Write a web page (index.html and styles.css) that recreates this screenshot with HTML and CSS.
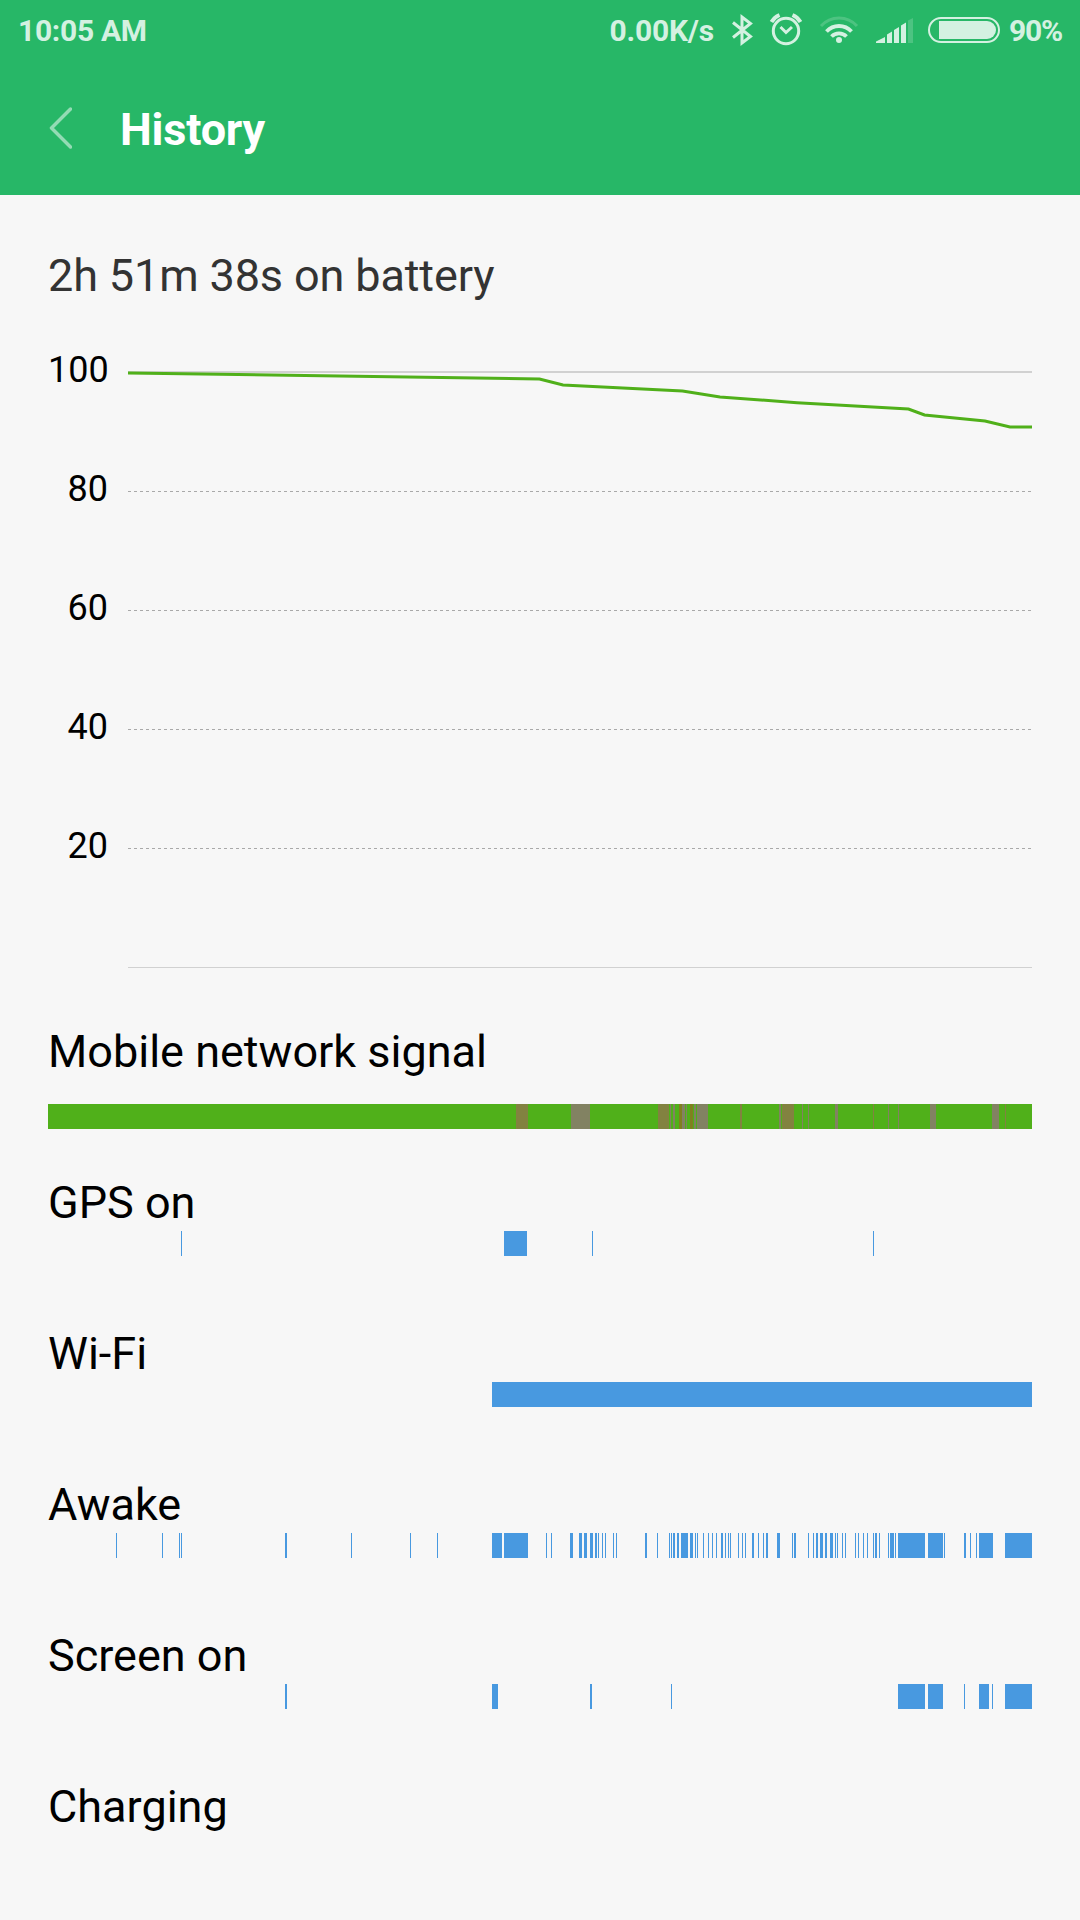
FILE: index.html
```
<!DOCTYPE html>
<html lang="en">
<head>
    <meta charset="UTF-8">
    <meta name="viewport" content="width=device-width, initial-scale=1.0">
    <title>History</title>
    <link rel="stylesheet" href="styles.css">
</head>
<body>
    <div class="header">
        <div class="status-bar">
            <span class="clock">10:05 AM</span>
            <span class="speed">0.00K/s</span>
            <svg class="status-icons" width="282" height="60" viewBox="718 0 282 60">
                <!-- bluetooth -->
                <path class="stroke" stroke-width="3" d="M733 22.5l17.500 14l-8.500 6.500V17l8.500 6.500L733 37.500"/>
                <!-- alarm -->
                <circle class="stroke" stroke-width="3" cx="786" cy="31" r="12.700"/>
                <path class="stroke" stroke-width="3" d="M780.500 27l5.500 5.500l6-5.500"/>
                <path class="stroke" stroke-width="4" d="M771.500 22q3-5 8-7M800.500 22q-3-5-8-7"/>
                <!-- wifi -->
                <path class="stroke faint" stroke-width="3" d="M821 26a24.200 24.200 0 0 1 36 0"/>
                <path class="stroke" stroke-width="3.800" d="M826.500 31.500a17 17 0 0 1 25 0M831.500 36.500a10.500 10.500 0 0 1 15 0"/>
                <circle class="fill" cx="839" cy="40" r="3"/>
                <!-- signal -->
                <path class="fill" d="M876 43v-1.500l9-4.500v6zM887 43v-8.500l5-3V43zM894 43V30l5-3v16zM901 43V25.500l5-3V43z"/>
                <path class="fill faint" d="M908 43V20.500l5-2.500v25z"/>
                <!-- battery -->
                <rect class="stroke" stroke-width="2" x="929" y="18" width="70" height="24" rx="12"/>
                <path class="fill" d="M939 21h48a9 9 0 0 1 0 18h-48z"/>
            </svg>
            <span class="percent">90%</span>
        </div>
        <div class="title-bar">
            <svg class="back" width="24" height="44" viewBox="0 0 24 44">
                <path d="M22.500 3L3.500 22l19 19"/>
            </svg>
            <h1>History</h1>
        </div>
    </div>

    <div class="content">
        <h2 class="duration">2h 51m 38s on battery</h2>

        <div class="chart">
            <div class="axis">
                <span>100</span>
                <span>80</span>
                <span>60</span>
                <span>40</span>
                <span>20</span>
            </div>
            <svg class="plot" width="904" height="600" viewBox="128 370 904 600">
                <path class="solid" stroke-width="2" d="M128 372h904"/>
                <path class="solid" stroke-width="1" d="M128 967.5h904"/>
                <path class="dashed" d="M128 491.5h904M128 610.500h904M128 729.500h904M128 848.500h904"/>
                <polyline class="level" points="128,373 539.500,379 563,385 682.500,391 720,397 797,402.700 908.500,409 924.500,415 985,421 1010,427 1032,427"/>
            </svg>
        </div>

        <div class="row signal">
            <h2>Mobile network signal</h2>
            <svg class="track" id="signal" viewBox="48 0 984 25"></svg>
        </div>
        <div class="row">
            <h2>GPS on</h2>
            <svg class="track" id="gps" viewBox="48 0 984 25"></svg>
        </div>
        <div class="row">
            <h2>Wi-Fi</h2>
            <svg class="track" id="wifi" viewBox="48 0 984 25"></svg>
        </div>
        <div class="row">
            <h2>Awake</h2>
            <svg class="track" id="awake" viewBox="48 0 984 25"></svg>
        </div>
        <div class="row">
            <h2>Screen on</h2>
            <svg class="track" id="screen" viewBox="48 0 984 25"></svg>
        </div>
        <div class="row">
            <h2>Charging</h2>
        </div>
    </div>

    <script src="script.js"></script>
</body>
</html>
```
FILE: styles.css
```
* {
    margin: 0;
    padding: 0;
    box-sizing: border-box;
}

body {
    font-family: Roboto, sans-serif;
    background-color: #f7f7f7;
    color: #000000;
    height: 1920px;
    overflow: hidden;
}

.header {
    height: 195px;
    background-color: #27b767;
    color: #ffffff;
}

.status-bar {
    display: flex;
    align-items: center;
    height: 60px;
    padding: 0 18px;
    font-size: 30px;
    font-weight: bold;
    line-height: 60px;
    color: #d4f1e1;
}

.clock {
    margin-right: auto;
    padding-top: 2px;
    letter-spacing: -0.3px;
}

.speed {
    margin-right: 4px;
    padding-top: 2px;
    letter-spacing: -0.2px;
}

.percent {
    width: 53px;
    margin-left: 9px;
    padding-top: 2px;
    letter-spacing: -1.2px;
    white-space: nowrap;
}

.stroke {
    fill: none;
    stroke: #d4f1e1;
}

.fill {
    fill: #d4f1e1;
}

.faint {
    opacity: 0.22;
}

.title-bar {
    display: flex;
    align-items: center;
    height: 135px;
    padding: 0 0 0 48px;
}

.back {
    margin-top: 1px;
    fill: none;
    stroke: #93dbb4;
    stroke-width: 3.5;
    stroke-linecap: round;
    stroke-linejoin: round;
}

h1 {
    margin-left: 48px;
    padding-top: 4px;
    font-size: 45px;
    line-height: 50px;
    letter-spacing: -0.2px;
}

h2 {
    font-size: 45px;
    font-weight: normal;
    line-height: 50px;
}

.content {
    padding: 56px 48px 0;
}

.duration {
    color: #333333;
    letter-spacing: -0.13px;
}

.chart {
    display: flex;
    justify-content: space-between;
    height: 600px;
    margin-top: 69px;
}

.axis {
    display: flex;
    flex-direction: column;
    width: 60px;
    margin-top: -20px;
    font-size: 36px;
    line-height: 41px;
    text-align: right;
}

.axis span {
    height: 119px;
}

.solid {
    stroke: #d1d1d1;
}

.dashed {
    fill: none;
    stroke: #a9a9a9;
    stroke-dasharray: 3 3;
}

.level {
    fill: none;
    stroke: #50b01a;
    stroke-width: 3;
}

.row {
    height: 151px;
}

.signal {
    margin-top: 57px;
}

.track {
    display: block;
    width: 984px;
    height: 25px;
    margin-top: 3px;
    fill: #4899e0;
    shape-rendering: crispEdges;
}

.signal .track {
    margin-top: 27px;
}
```
FILE: script.js
```
const GREEN = '#50b01a';
const BROWN = '#828240';
const GRAY = '#828262';
const OLIVE = '#808020';

// [start, width, color]
const tracks = {
    signal: [
        [48, 984, GREEN],
        [516, 12, BROWN], [571, 19, GRAY], [658, 11, BROWN], [670, 1, GRAY],
        [673, 2, GRAY], [679, 3, OLIVE], [682, 3, GRAY], [686, 1, GRAY],
        [690, 3, OLIVE], [694, 2, GRAY], [697, 11, GRAY], [740, 2, BROWN],
        [779, 2, GRAY], [782, 12, BROWN], [802, 1, GRAY], [808, 1, GRAY],
        [835, 3, GRAY], [873, 1, BROWN], [888, 1, GRAY], [898, 1, GRAY],
        [930, 6, GRAY], [992, 7, GRAY], [1005, 1, BROWN]
    ],
    gps: [[181, 1], [504, 23], [592, 1], [873, 1]],
    wifi: [[492, 540]],
    awake: [
        [116, 1], [162, 1], [179, 1], [181, 1], [285, 2], [351, 1], [410, 1], [437, 1],
        [492, 10], [504, 24], [546, 1], [551, 1], [570, 3], [579, 3], [584, 3], [590, 3],
        [595, 2], [598, 1], [602, 1], [605, 1], [613, 1], [616, 1], [645, 2], [657, 1],
        [669, 1], [671, 1], [673, 2], [677, 2], [681, 7], [690, 3], [695, 1], [697, 1],
        [703, 1], [708, 1], [712, 1], [716, 1], [721, 2], [725, 1], [728, 1], [730, 1],
        [738, 1], [742, 1], [745, 1], [752, 2], [758, 1], [763, 1], [766, 2], [777, 3],
        [792, 1], [794, 2], [808, 1], [813, 1], [816, 2], [820, 3], [825, 2], [830, 3],
        [835, 1], [837, 1], [842, 1], [845, 1], [855, 1], [858, 1], [863, 1], [867, 1],
        [873, 1], [875, 2], [879, 1], [888, 1], [890, 4], [895, 1], [898, 27], [928, 15],
        [944, 1], [964, 2], [970, 1], [976, 1], [979, 14], [1005, 27]
    ],
    screen: [
        [285, 2], [492, 6], [590, 2], [671, 1], [898, 27], [928, 15],
        [964, 1], [979, 10], [992, 1], [1005, 27]
    ]
};

Object.keys(tracks).forEach(function(id) {
    let html = '';
    tracks[id].forEach(function(seg) {
        const fill = seg[2] ? ` fill="${seg[2]}"` : '';
        html += `<rect x="${seg[0]}" width="${seg[1]}" height="25"${fill}/>`;
    });
    document.getElementById(id).innerHTML = html;
});
```
